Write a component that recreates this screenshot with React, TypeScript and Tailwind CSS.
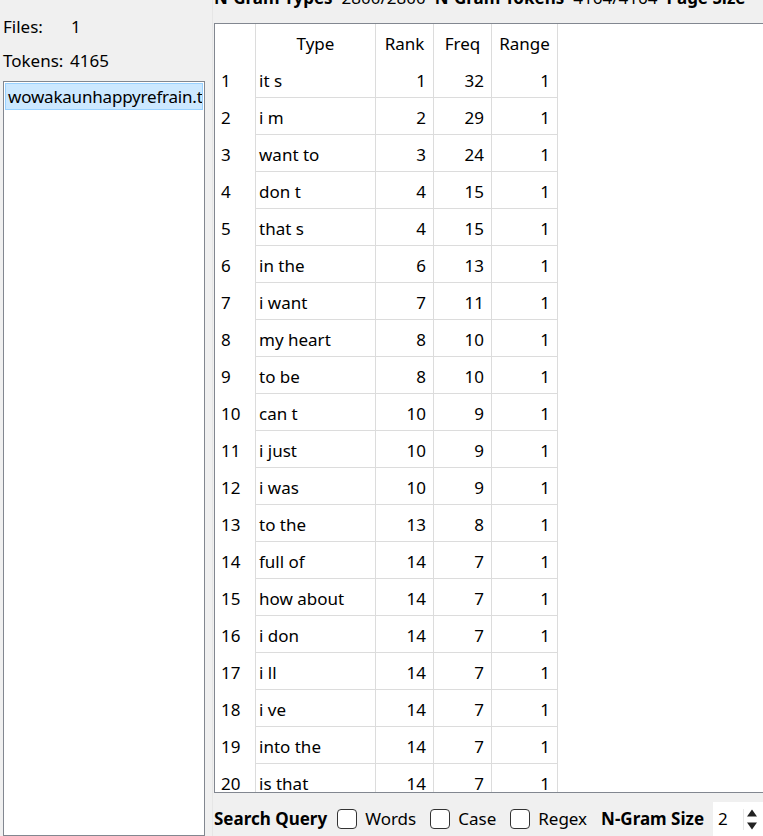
const rows: [string, number, number, number][] = [
  ["it s", 1, 32, 1],
  ["i m", 2, 29, 1],
  ["want to", 3, 24, 1],
  ["don t", 4, 15, 1],
  ["that s", 4, 15, 1],
  ["in the", 6, 13, 1],
  ["i want", 7, 11, 1],
  ["my heart", 8, 10, 1],
  ["to be", 8, 10, 1],
  ["can t", 10, 9, 1],
  ["i just", 10, 9, 1],
  ["i was", 10, 9, 1],
  ["to the", 13, 8, 1],
  ["full of", 14, 7, 1],
  ["how about", 14, 7, 1],
  ["i don", 14, 7, 1],
  ["i ll", 14, 7, 1],
  ["i ve", 14, 7, 1],
  ["into the", 14, 7, 1],
  ["is that", 14, 7, 1],
];

function Check({ label }: { label: string }) {
  return (
    <label className="flex items-center gap-[8px]">
      <span className="h-[20px] w-[20px] rounded-[4px] border border-[#333] bg-white" />
      <span>{label}</span>
    </label>
  );
}

export default function App() {
  return (
    <div
      className="flex h-[836px] w-[763px] overflow-hidden bg-[#f0f0f0] text-[17px] leading-[24px] text-black"
      style={{ fontFamily: '"Noto Sans", "Open Sans", sans-serif' }}
    >
      {/* left: corpus info + file list */}
      <div className="flex w-[212px] shrink-0 flex-col pl-[3px]">
        <div className="mt-[15px] flex h-[24px]">
          <span className="w-[68px]">Files:</span>
          <span>1</span>
        </div>
        <div className="mt-[10px] flex h-[24px]">
          <span className="w-[67px]">Tokens:</span>
          <span>4165</span>
        </div>
        <div className="mt-[8px] w-[202px] flex-1 border border-[#828790] bg-white p-px">
          <div className="h-[27px] overflow-hidden whitespace-nowrap border border-[#99d1ff] bg-[#cce8ff] pl-[2px] leading-[25px] tracking-[-0.2px]">
            wowakaunhappyrefrain.txt
          </div>
        </div>
      </div>

      <div className="w-px shrink-0 bg-[#e6e6e6]" />

      {/* right: n-gram table */}
      <div className="flex min-w-0 flex-1 flex-col pl-px">
        <div className="h-[23px] shrink-0">
          <div className="-mt-[14px] flex gap-[9px] whitespace-nowrap">
            <b>N-Gram Types</b>
            <span>2800/2800</span>
            <b>N-Gram Tokens</b>
            <span>4164/4164</span>
            <b>Page Size</b>
          </div>
        </div>

        <div className="flex-1 overflow-hidden border border-r-0 border-[#828790] bg-white">
          <div className="flex h-[37px]">
            <div className="w-[41px] shrink-0 border-r border-[#dcdcdc]" />
            <div className="w-[120px] shrink-0 border-r border-[#dcdcdc] pt-[8px] text-center">Type</div>
            <div className="w-[58px] shrink-0 border-r border-[#dcdcdc] pt-[8px] text-center">Rank</div>
            <div className="w-[58px] shrink-0 border-r border-[#dcdcdc] pt-[8px] text-center">Freq</div>
            <div className="w-[66px] shrink-0 border-r border-[#dcdcdc] pt-[8px] text-center">Range</div>
          </div>
          {rows.map(([type, rank, freq, range], i) => (
            <div key={i} className="flex h-[37px]">
              <div className="w-[41px] shrink-0 border-r border-[#dcdcdc] pl-[6px] pt-[8px]">{i + 1}</div>
              <div className="w-[120px] shrink-0 border-b border-r border-[#dcdcdc] pl-[3px] pt-[8px]">{type}</div>
              <div className="w-[58px] shrink-0 border-b border-r border-[#dcdcdc] pr-[7px] pt-[8px] text-right">{rank}</div>
              <div className="w-[58px] shrink-0 border-b border-r border-[#dcdcdc] pr-[7px] pt-[8px] text-right">{freq}</div>
              <div className="w-[66px] shrink-0 border-b border-r border-[#dcdcdc] pr-[7px] pt-[8px] text-right">{range}</div>
            </div>
          ))}
        </div>

        {/* search options */}
        <div className="flex h-[43px] shrink-0 items-end pb-[5px]">
          <b className="mr-[10px]">Search Query</b>
          <div className="flex gap-[14px]">
            <Check label="Words" />
            <Check label="Case" />
            <Check label="Regex" />
          </div>
          <b className="ml-[14px] mr-[9px]">N-Gram Size</b>
          <div className="-mb-[5px] flex h-[34px] flex-1 items-center bg-white pl-[5px]">
            <span className="flex-1">2</span>
            <div className="mr-[5px] flex flex-col items-center gap-[5px] border-l border-[#e8e8e8] pl-[2px] text-[#222]">
              <svg width="12" height="8" viewBox="0 0 12 8">
                <path d="M6 0.5 L11 7.5 L1 7.5 Z" fill="currentColor" />
              </svg>
              <svg width="12" height="8" viewBox="0 0 12 8">
                <path d="M1 0.5 L11 0.5 L6 7.5 Z" fill="currentColor" />
              </svg>
            </div>
          </div>
        </div>
      </div>
    </div>
  );
}
